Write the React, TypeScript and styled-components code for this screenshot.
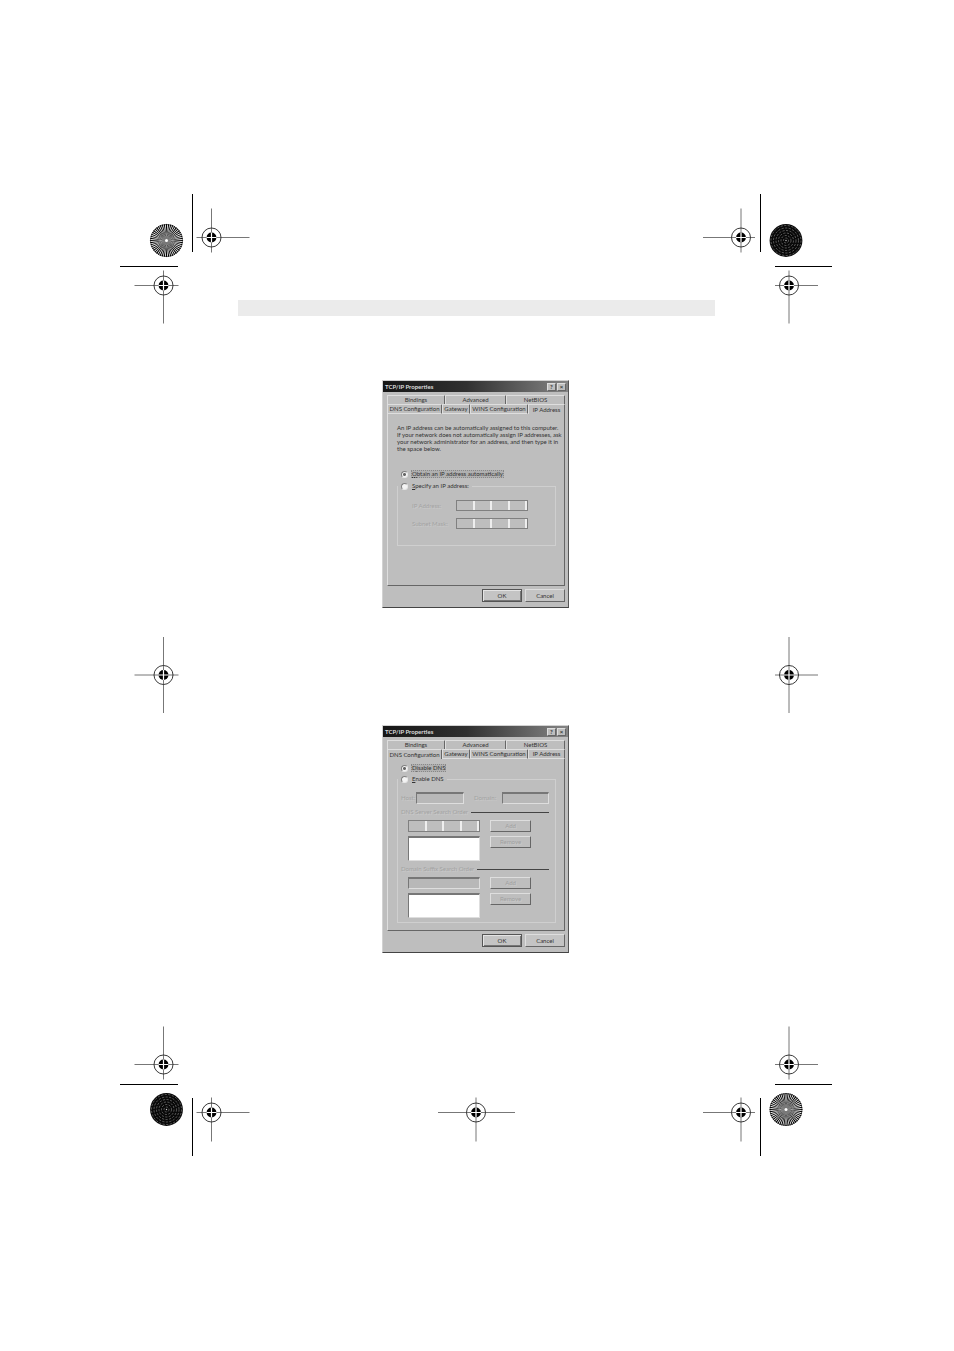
import React from "react";
import styled, { createGlobalStyle, css } from "styled-components";

const GlobalStyle = createGlobalStyle`
  *, *::before, *::after { box-sizing: border-box; }
  body { margin: 0; background: #fff; }
  button, input, select { font: inherit; color: inherit; }
`;

const face = "#bebebe";
const light = "#dedede";
const shade = "#777";

const raised = css`
  border: 1px solid;
  border-color: ${light} #666 #666 ${light};
`;
const sunken = css`
  border: 1px solid;
  border-color: ${shade} ${light} ${light} ${shade};
`;

/* ---------- printed sheet ---------- */

const Sheet = styled.main`
  display: grid;
  grid-template-columns: 130px minmax(0, 1fr) 130px;
  padding: 194px 122px 195px 120px;
  font-family: Lato, "Liberation Sans", Arial, sans-serif;
`;

const Corner = styled.svg<{ $row: number; $col: number }>`
  display: block;
  width: 130px;
  height: 130px;
  grid-row: ${(p) => p.$row};
  grid-column: ${(p) => p.$col};
`;

const SideMark = styled.svg<{ $col: number }>`
  display: block;
  width: 130px;
  height: 78px;
  grid-row: 2;
  grid-column: ${(p) => p.$col};
  align-self: center;
`;

const FootMark = styled.svg`
  display: block;
  width: 78px;
  height: 130px;
  grid-row: 3;
  grid-column: 2;
  justify-self: center;
`;

const HeaderBand = styled.div`
  grid-row: 1;
  grid-column: 1 / -1;
  align-self: end;
  height: 16px;
  margin: 0 117px 8px 118px;
  background: #ebebeb;
`;

const Figures = styled.div`
  grid-row: 2;
  grid-column: 2;
  display: flex;
  flex-direction: column;
  align-items: center;
  gap: 117px;
  padding: 56px 1px 73px 0;
`;

/* ---------- dialog ---------- */

const Window = styled.section`
  width: 187px;
  background: ${face};
  border: 1px solid;
  border-color: #d2d2d2 #555 #444 #d2d2d2;
  font-size: 6px;
  line-height: 8px;
  color: #333;
`;

const TitleBar = styled.header`
  display: flex;
  align-items: center;
  height: 11px;
  padding: 0 2px;
  background: linear-gradient(90deg, #161616 0%, #303030 45%, #858585 100%);
`;

const Title = styled.h2`
  flex: 1;
  margin: 0;
  font-size: 6px;
  line-height: 8px;
  color: #dcdcdc;
`;

const CaptionButton = styled.button`
  ${raised}
  display: grid;
  place-items: center;
  width: 9px;
  height: 8px;
  margin-left: 1px;
  padding: 0;
  background: ${face};
  font-weight: bold;
  line-height: 6px;
`;

const Body = styled.div`
  padding: 3px 3px 5px 4px;
`;

const TabRow = styled.div<{ $columns: string }>`
  display: grid;
  grid-template-columns: ${(p) => p.$columns};
  height: 9px;
`;

const Tab = styled.button<{ $active?: boolean }>`
  min-width: 0;
  padding: 0;
  white-space: nowrap;
  line-height: 8px;
  text-align: center;
  background: ${face};
  border: 1px solid;
  border-color: ${light} #666 ${(p) => (p.$active ? face : light)} ${light};
  border-bottom-width: ${(p) => (p.$active ? 0 : 1)}px;
  border-radius: 1px 1px 0 0;
`;

const Panel = styled.div<{ $top: number }>`
  height: 173px;
  padding: ${(p) => p.$top}px 8px 0 9px;
  border: 1px solid;
  border-color: ${face} #666 #666 ${light};
`;

const Hint = styled.p`
  margin: 0 0 18px;
  line-height: 7px;
  white-space: nowrap;
`;

const RadioLabel = styled.label<{ $inset?: boolean }>`
  display: flex;
  align-items: center;
  gap: 3px;
  height: 8px;
  padding-left: ${(p) => (p.$inset ? 4 : 3)}px;
`;

const Radio = styled.input`
  appearance: none;
  width: 7px;
  height: 7px;
  margin: 0;
  border: 1px solid;
  border-color: #808080 #e8e8e8 #e8e8e8 #808080;
  border-radius: 50%;
  background: #f4f4f4;
  &:checked {
    background: radial-gradient(circle, #666 0 1px, #f4f4f4 2px);
  }
`;

const RadioText = styled.span<{ $focused?: boolean }>`
  padding: 0 1px;
  white-space: nowrap;
  background: ${(p) => (p.$focused ? "#b0b0b0" : "transparent")};
  outline: ${(p) => (p.$focused ? "1px dotted #888" : "none")};
  outline-offset: -1px;
`;

const Group = styled.fieldset<{ $gap: number; $bottom?: number }>`
  min-width: 0;
  margin: ${(p) => p.$gap}px 0 0;
  padding: 0 0 ${(p) => p.$bottom ?? 0}px;
  border: 1px solid #cfcfcf;
`;

const GroupLegend = styled.legend`
  padding: 0 2px 0 0;
`;

const AddressRows = styled.div`
  display: grid;
  gap: 7px;
  padding: 10px 0 16px 14px;
`;

const AddressRow = styled.div`
  display: grid;
  grid-template-columns: 44px 72px;
  align-items: center;
  height: 11px;
`;

const Faint = styled.label`
  white-space: nowrap;
  color: #a3a3a3;
  text-shadow: 1px 1px 0 #cacaca;
`;

const Octets = styled.div`
  display: grid;
  grid-template-columns: repeat(4, 1fr);
  height: 100%;
  border: 1px solid #808080;
`;

const Octet = styled.input`
  width: 100%;
  min-width: 0;
  height: 100%;
  padding: 0;
  border: 0;
  border-right: 2px solid #eee;
  background: ${face};
`;

const HostRow = styled.div`
  display: grid;
  grid-template-columns: 15px 48px 38px 47px;
  justify-content: start;
  align-items: center;
  height: 12px;
  margin-top: 9px;
  padding-left: 3px;
`;

const DomainLabel = styled(Faint)`
  padding-left: 10px;
`;

const TextBox = styled.input`
  ${sunken}
  border-top-width: 2px;
  width: 100%;
  min-width: 0;
  height: 12px;
  padding: 0;
  background: #b8b8b8;
`;

const Section = styled.section`
  margin-top: 4px;
`;

const SectionTitle = styled.div`
  display: flex;
  align-items: center;
  gap: 3px;
  height: 8px;
  margin-bottom: 4px;
  padding: 0 6px 0 3px;
  &::after {
    content: "";
    flex: 1;
    height: 1px;
    background: #444;
  }
`;

const SectionBody = styled.div`
  display: grid;
  grid-template-columns: 72px 41px;
  column-gap: 10px;
  padding-left: 10px;
`;

const Stack = styled.div`
  display: grid;
  grid-auto-rows: max-content;
  gap: 4px;
`;

const OctetSlot = styled.div`
  height: 12px;
`;

const ListBox = styled.div`
  ${sunken}
  height: 25px;
  border-top-width: 2px;
  background: #fff;
`;

const SmallButton = styled.button`
  ${raised}
  height: 12px;
  padding: 0;
  background: ${face};
  color: #a0a0a0;
  text-shadow: 1px 1px 0 #cacaca;
  line-height: 8px;
`;

const Footer = styled.footer`
  display: flex;
  justify-content: flex-end;
  gap: 3px;
  margin-top: 3px;
`;

const DialogButton = styled.button<{ $primary?: boolean }>`
  ${raised}
  width: 40px;
  height: 13px;
  padding: 0;
  background: #c4c4c4;
  line-height: 8px;
  ${(p) => p.$primary && css`
    border-color: #555;
    box-shadow: inset 1px 1px 0 #e4e4e4, inset -1px -1px 0 #777;
  `}
`;

/* ---------- printer marks ---------- */

type TargetProps = { x: number; y: number; l: number; r: number; t: number; b: number };

/* Registration target: x, y is the centre; l, r, t, b are the arm lengths. */
const Target = ({ x, y, l, r, t, b }: TargetProps) => (
  <g>
    <path d={`M${x - l} ${y}H${x + r}M${x} ${y - t}V${y + b}`} stroke="#777" />
    <circle cx={x} cy={y} r="9.5" fill="none" stroke="#222" strokeWidth="0.9" />
    <circle cx={x} cy={y} r="4.9" fill="#000" />
    <path d={`M${x - 5} ${y}h10M${x} ${y - 5}v10`} stroke="#fff" strokeWidth="1.2" />
  </g>
);

const SPOKES = 48;

const Burst = ({ x, y }: { x: number; y: number }) => {
  const at = (step: number) => {
    const a = (step * 2 * Math.PI) / SPOKES;
    return `${(x + 16.4 * Math.cos(a)).toFixed(2)} ${(y + 16.4 * Math.sin(a)).toFixed(2)}`;
  };
  const d = Array.from({ length: SPOKES }, (_, i) => `M${x} ${y}L${at(i - 0.29)}L${at(i + 0.29)}Z`).join("");
  return (
    <g>
      <path d={d} fill="#000" />
      <circle cx={x} cy={y} r="16.1" fill="none" stroke="#111" strokeWidth="0.6" />
      <circle cx={x} cy={y} r="5" fill="#808080" opacity="0.6" />
      <circle cx={x} cy={y} r="1.5" fill="#fff" />
    </g>
  );
};

const Rings = ({ x, y }: { x: number; y: number }) => (
  <g fill="none">
    <circle cx={x} cy={y} r="16.4" fill="#080808" />
    {[2.5, 5, 7.5, 10, 12.5, 15].map((r) => (
      <circle key={r} cx={x} cy={y} r={r} stroke="#fff" strokeWidth="0.6" strokeDasharray="2.2 1.4" opacity="0.55" />
    ))}
    <circle cx={x} cy={y} r="0.7" fill="#ccc" />
  </g>
);

/* ---------- pieces shared by both dialogs ---------- */

const AddressField = ({ id, name }: { id: string; name: string }) => (
  <Octets role="group" aria-label={name}>
    {[1, 2, 3, 4].map((n) => (
      <Octet key={n} id={n === 1 ? id : undefined} aria-label={`${name} part ${n}`} disabled />
    ))}
  </Octets>
);

type DialogProps = { active: string; top: number; children: React.ReactNode };

const Dialog = ({ active, top, children }: DialogProps) => (
  <Window aria-label="TCP/IP Properties">
    <TitleBar>
      <Title>TCP/IP Properties</Title>
      <CaptionButton aria-label="Help">?</CaptionButton>
      <CaptionButton aria-label="Close">×</CaptionButton>
    </TitleBar>
    <Body>
      <TabRow $columns="58fr 61fr 59fr">
        {["Bindings", "Advanced", "NetBIOS"].map((t) => (
          <Tab key={t}>{t}</Tab>
        ))}
      </TabRow>
      <TabRow $columns="55fr 28fr 58fr 37fr">
        {["DNS Configuration", "Gateway", "WINS Configuration", "IP Address"].map((t) => (
          <Tab key={t} $active={t === active}>{t}</Tab>
        ))}
      </TabRow>
      <Panel $top={top}>{children}</Panel>
      <Footer>
        <DialogButton $primary>OK</DialogButton>
        <DialogButton>Cancel</DialogButton>
      </Footer>
    </Body>
  </Window>
);

const AddressDialog = () => (
  <Dialog active="IP Address" top={10}>
    <Hint>
      An IP address can be automatically assigned to this computer.<br />
      If your network does not automatically assign IP addresses, ask<br />
      your network administrator for an address, and then type it in<br />
      the space below.
    </Hint>
    <RadioLabel $inset>
      <Radio type="radio" name="address" defaultChecked />
      <RadioText $focused><u>O</u>btain an IP address automatically</RadioText>
    </RadioLabel>
    <Group $gap={4}>
      <GroupLegend>
        <RadioLabel>
          <Radio type="radio" name="address" />
          <RadioText><u>S</u>pecify an IP address:</RadioText>
        </RadioLabel>
      </GroupLegend>
      <AddressRows>
        <AddressRow>
          <Faint htmlFor="ip">IP Address:</Faint>
          <AddressField id="ip" name="IP Address" />
        </AddressRow>
        <AddressRow>
          <Faint htmlFor="mask">Subnet Mask:</Faint>
          <AddressField id="mask" name="Subnet Mask" />
        </AddressRow>
      </AddressRows>
    </Group>
  </Dialog>
);

const DnsDialog = () => (
  <Dialog active="DNS Configuration" top={5}>
    <RadioLabel $inset>
      <Radio type="radio" name="dns" defaultChecked />
      <RadioText $focused>D<u>i</u>sable DNS</RadioText>
    </RadioLabel>
    <Group $gap={3} $bottom={4}>
      <GroupLegend>
        <RadioLabel>
          <Radio type="radio" name="dns" />
          <RadioText><u>E</u>nable DNS</RadioText>
        </RadioLabel>
      </GroupLegend>
      <HostRow>
        <Faint htmlFor="host">Host:</Faint>
        <TextBox id="host" disabled />
        <DomainLabel htmlFor="domain">Domain:</DomainLabel>
        <TextBox id="domain" disabled />
      </HostRow>
      <Section>
        <SectionTitle><Faint htmlFor="server">DNS Server Search Order</Faint></SectionTitle>
        <SectionBody>
          <Stack>
            <OctetSlot><AddressField id="server" name="DNS Server" /></OctetSlot>
            <ListBox />
          </Stack>
          <Stack>
            <SmallButton disabled>Add</SmallButton>
            <SmallButton disabled>Remove</SmallButton>
          </Stack>
        </SectionBody>
      </Section>
      <Section>
        <SectionTitle><Faint htmlFor="suffix">Domain Suffix Search Order</Faint></SectionTitle>
        <SectionBody>
          <Stack>
            <TextBox id="suffix" disabled />
            <ListBox />
          </Stack>
          <Stack>
            <SmallButton disabled>Add</SmallButton>
            <SmallButton disabled>Remove</SmallButton>
          </Stack>
        </SectionBody>
      </Section>
    </Group>
  </Dialog>
);

export default function App() {
  return (
    <>
      <GlobalStyle />
      <Sheet>
        <Corner $row={1} $col={1} viewBox="0 0 130 130" aria-hidden="true">
          <path d="M72.5 0V58M0 72.5H58" stroke="#000" />
          <Burst x={46.5} y={46.5} />
          <Target x={91.5} y={43.5} l={15} r={38} t={29} b={15} />
          <Target x={43.5} y={91.5} l={29} r={15} t={15} b={38} />
        </Corner>
        <Corner $row={1} $col={3} viewBox="0 0 130 130" aria-hidden="true">
          <path d="M58.5 0V58M73 72.5H130" stroke="#000" />
          <Rings x={84} y={46.5} />
          <Target x={39} y={43.5} l={38} r={14} t={29} b={15} />
          <Target x={87} y={91.5} l={14} r={29} t={15} b={38} />
        </Corner>
        <HeaderBand />

        <SideMark $col={1} viewBox="0 0 130 78" aria-hidden="true">
          <Target x={43.5} y={39} l={29} r={15} t={38} b={38} />
        </SideMark>
        <Figures>
          <AddressDialog />
          <DnsDialog />
        </Figures>
        <SideMark $col={3} viewBox="0 0 130 78" aria-hidden="true">
          <Target x={87} y={39} l={14} r={29} t={38} b={38} />
        </SideMark>

        <Corner $row={3} $col={1} viewBox="0 0 130 130" aria-hidden="true">
          <path d="M72.5 72V130M0 58.5H58" stroke="#000" />
          <Rings x={46.5} y={83.5} />
          <Target x={91.5} y={86.5} l={15} r={38} t={15} b={29} />
          <Target x={43.5} y={38.5} l={29} r={15} t={38} b={15} />
        </Corner>
        <FootMark viewBox="0 0 78 130" aria-hidden="true">
          <Target x={39} y={86.5} l={38} r={39} t={15} b={29} />
        </FootMark>
        <Corner $row={3} $col={3} viewBox="0 0 130 130" aria-hidden="true">
          <path d="M58.5 72V130M73 58.5H130" stroke="#000" />
          <Burst x={84} y={83.5} />
          <Target x={39} y={86.5} l={38} r={14} t={15} b={29} />
          <Target x={87} y={38.5} l={14} r={29} t={38} b={15} />
        </Corner>
      </Sheet>
    </>
  );
}
